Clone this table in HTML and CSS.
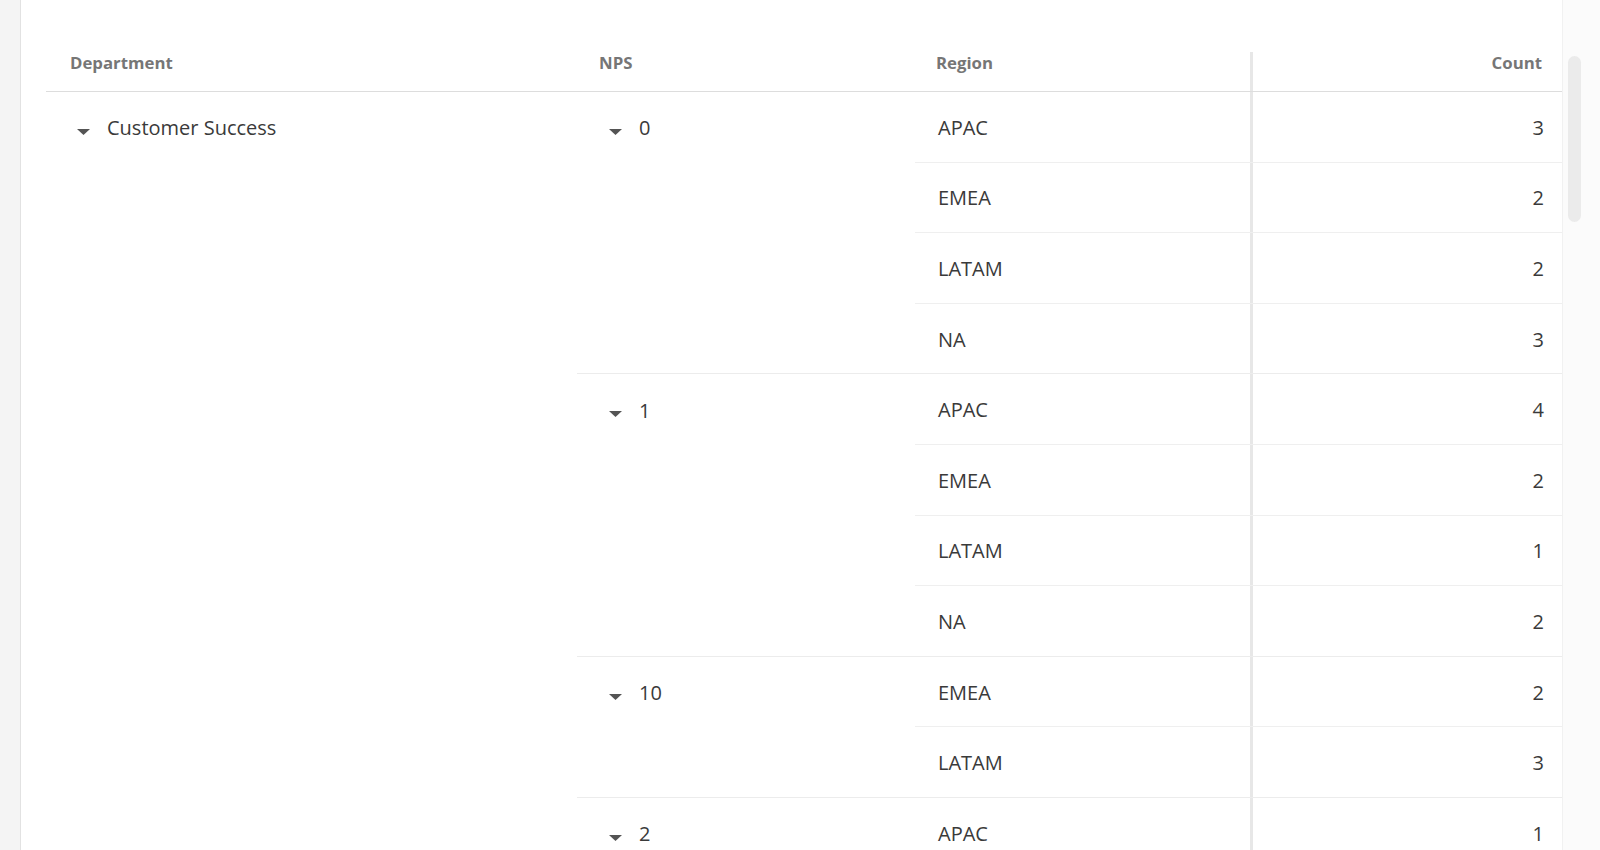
FILE: index.html
```html
<!DOCTYPE html>
<html lang="en">
<head>
<meta charset="utf-8">
<title>Pivot grid</title>
<link rel="stylesheet" href="styles.css">
</head>
<body>
<div class="app">
  <div class="rail"></div>
  <main class="content">
    <div class="grid">
      <div class="grid-head">
        <div class="hcell col-dept">Department</div>
        <div class="hcell col-nps">NPS</div>
        <div class="hcell col-region">Region</div>
        <div class="hcell col-count">Count</div>
      </div>
      <div class="grid-body">
        <div class="dept-group">
          <div class="tree-cell col-dept">
            <svg class="caret" viewBox="0 0 13 6" width="13" height="6"><path d="M0 0h13L6.5 6z"/></svg>
            <span class="tree-label">Customer Success</span>
          </div>
          <div class="nps-list">
            <div class="nps-group">
              <div class="tree-cell col-nps">
                <svg class="caret" viewBox="0 0 13 6" width="13" height="6"><path d="M0 0h13L6.5 6z"/></svg>
                <span class="tree-label">0</span>
              </div>
              <div class="leaf-list">
                <div class="leaf"><div class="cell col-region">APAC</div><div class="cell col-count">3</div></div>
                <div class="leaf"><div class="cell col-region">EMEA</div><div class="cell col-count">2</div></div>
                <div class="leaf"><div class="cell col-region">LATAM</div><div class="cell col-count">2</div></div>
                <div class="leaf"><div class="cell col-region">NA</div><div class="cell col-count">3</div></div>
              </div>
            </div>
            <div class="nps-group">
              <div class="tree-cell col-nps">
                <svg class="caret" viewBox="0 0 13 6" width="13" height="6"><path d="M0 0h13L6.5 6z"/></svg>
                <span class="tree-label">1</span>
              </div>
              <div class="leaf-list">
                <div class="leaf"><div class="cell col-region">APAC</div><div class="cell col-count">4</div></div>
                <div class="leaf"><div class="cell col-region">EMEA</div><div class="cell col-count">2</div></div>
                <div class="leaf"><div class="cell col-region">LATAM</div><div class="cell col-count">1</div></div>
                <div class="leaf"><div class="cell col-region">NA</div><div class="cell col-count">2</div></div>
              </div>
            </div>
            <div class="nps-group">
              <div class="tree-cell col-nps">
                <svg class="caret" viewBox="0 0 13 6" width="13" height="6"><path d="M0 0h13L6.5 6z"/></svg>
                <span class="tree-label">10</span>
              </div>
              <div class="leaf-list">
                <div class="leaf"><div class="cell col-region">EMEA</div><div class="cell col-count">2</div></div>
                <div class="leaf"><div class="cell col-region">LATAM</div><div class="cell col-count">3</div></div>
              </div>
            </div>
            <div class="nps-group">
              <div class="tree-cell col-nps">
                <svg class="caret" viewBox="0 0 13 6" width="13" height="6"><path d="M0 0h13L6.5 6z"/></svg>
                <span class="tree-label">2</span>
              </div>
              <div class="leaf-list">
                <div class="leaf"><div class="cell col-region">APAC</div><div class="cell col-count">1</div></div>
                <div class="leaf"><div class="cell col-region">EMEA</div><div class="cell col-count">3</div></div>
              </div>
            </div>
          </div>
        </div>
      </div>
    </div>
  </main>
  <div class="scroll-track"><div class="scroll-thumb"></div></div>
</div>
</body>
</html>
```

FILE: styles.css
```css
* { box-sizing: border-box; }

html, body {
  margin: 0;
  height: 100%;
  overflow: hidden;
  background: #ffffff;
  font-family: "Open Sans", "Noto Sans", sans-serif;
  color: #3a3a3a;
}

.app {
  display: flex;
  height: 850px;
}

.rail {
  width: 21px;
  flex: none;
  background: #f4f4f4;
  border-right: 1px solid #e2e2e2;
}

.content {
  flex: 1;
  min-width: 0;
  padding: 52px 0 0 25px;
  overflow: hidden;
}

.scroll-track {
  width: 38px;
  flex: none;
  background: #fbfbfb;
  border-left: 1px solid #f1f1f1;
  padding: 56px 0 0 5px;
}

.scroll-thumb {
  width: 13px;
  height: 166px;
  border-radius: 7px;
  background: #ebebeb;
}

.grid {
  width: 1516px;
}

.col-dept { width: 531px; }
.col-nps { width: 338px; }
.col-region { width: 335px; }
.col-count {
  width: 312px;
  border-left: 3px solid #e7e7e7;
  text-align: right;
}

.grid-head {
  display: flex;
  height: 40px;
  border-bottom: 1px solid #dddddd;
}

.hcell {
  font-size: 16.8px;
  font-weight: 700;
  line-height: 20px;
  padding-top: 1px;
  color: #767676;
  flex: none;
}
.hcell.col-dept { padding-left: 24px; }
.hcell.col-nps { padding-left: 22px; }
.hcell.col-region { padding-left: 21px; }
.hcell.col-count { padding-right: 20px; }

.grid-body {
  font-size: 20px;
}

.dept-group {
  display: flex;
}

.nps-list {
  display: flex;
  flex-direction: column;
}

.nps-group {
  display: flex;
  border-bottom: 1px solid #ececec;
}

.tree-cell {
  flex: none;
  height: 69.6px;
  display: flex;
  align-items: center;
  padding-left: 31px;
  padding-top: 3px;
}
.tree-cell.col-nps { padding-left: 32px; }

.caret {
  fill: #545454;
  margin-top: 7px;
  margin-right: 17px;
  flex: none;
}

.tree-label {
  line-height: 28px;
}

.leaf-list {
  display: flex;
  flex-direction: column;
}

.leaf {
  display: flex;
  height: 70.6px;
  border-bottom: 1px solid #efefef;
}
.leaf:last-child {
  height: 69.6px;
  border-bottom: none;
}

.cell {
  flex: none;
  display: flex;
  align-items: center;
  line-height: 28px;
  padding-top: 2px;
}
.cell.col-region { padding-left: 23px; }
.cell.col-count { justify-content: flex-end; padding-right: 18px; }
```
